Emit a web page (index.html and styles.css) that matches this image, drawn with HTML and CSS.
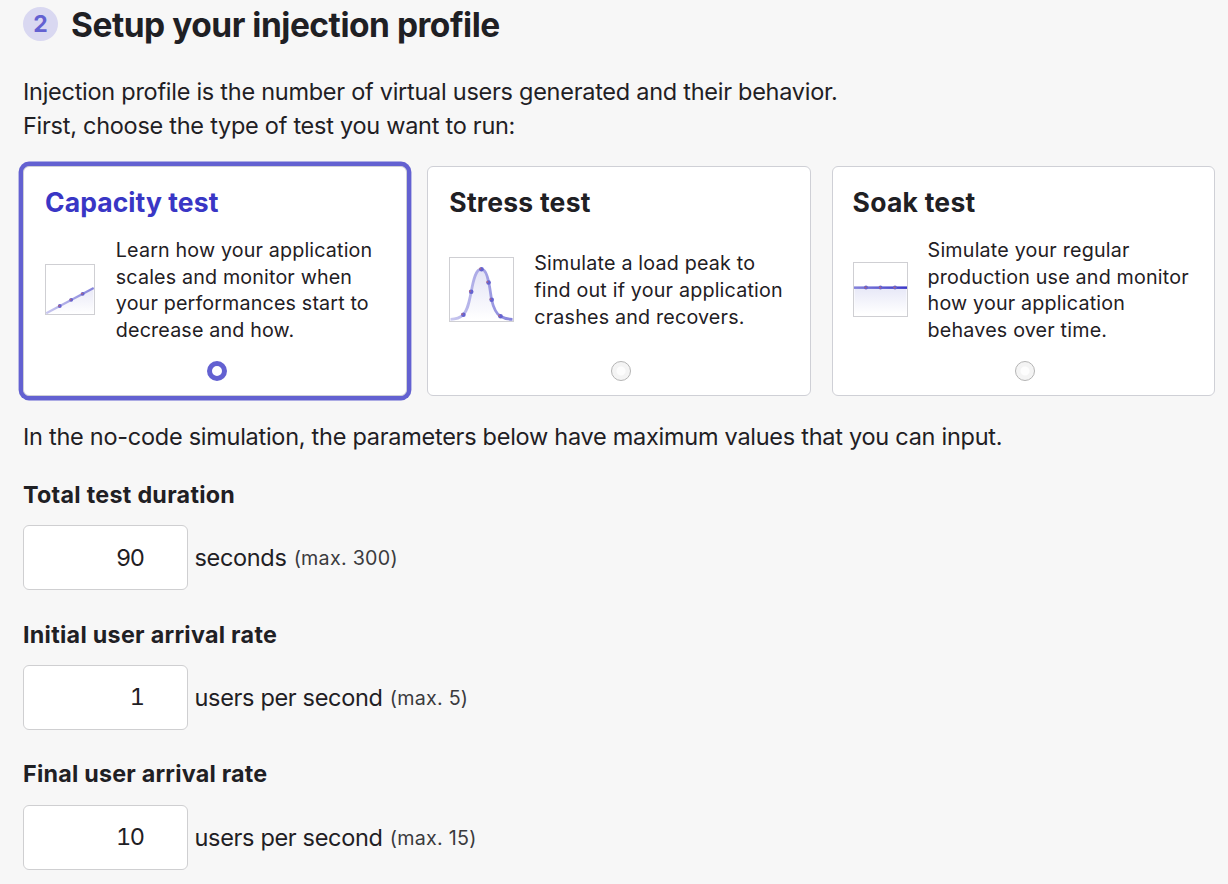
FILE: index.html
```html
<!DOCTYPE html>
<html lang="en">
<head>
<meta charset="utf-8">
<title>Setup your injection profile</title>
<link rel="stylesheet" href="styles.css">
</head>
<body>
<main class="page">
  <header class="step">
    <span class="step-number">2</span>
    <h1 class="step-title">Setup your injection profile</h1>
  </header>
  <p class="text intro">Injection profile is the number of virtual users generated and their behavior.<br>First, choose the type of test you want to run:</p>

  <section class="cards">
    <label class="card card-selected">
      <h2 class="card-title">Capacity test</h2>
      <div class="card-body">
        <svg class="chart" width="50" height="51" viewBox="0 0 50 51">
          <defs>
            <linearGradient id="line1"><stop offset="0" stop-color="#c9c8ef"/><stop offset="1" stop-color="#8583db"/></linearGradient>
            <linearGradient id="fill1" x1="0" y1="0" x2="0" y2="1"><stop offset="0" stop-color="#e9e9f7"/><stop offset="1" stop-color="#fff"/></linearGradient>
          </defs>
          <rect x=".5" y=".5" width="49" height="50" fill="#fff" stroke="#cfcfd3"/>
          <path d="M1 49.5 48.5 25V50H1z" fill="url(#fill1)"/>
          <path d="M1.2 49.2 48.7 24" fill="none" stroke="url(#line1)" stroke-width="2.2"/>
          <g fill="#6562cf"><circle cx="14.8" cy="42" r="1.9"/><circle cx="26.2" cy="35.8" r="1.9"/><circle cx="37.7" cy="29.8" r="1.9"/></g>
          <g fill="#b5687f"><circle cx="14.1" cy="41.8" r=".9"/><circle cx="25.5" cy="35.6" r=".9"/><circle cx="37" cy="29.6" r=".9"/></g>
        </svg>
        <p class="card-text">Learn how your application<br>scales and monitor when<br>your performances start to<br>decrease and how.</p>
      </div>
      <input class="radio" type="radio" name="test" checked>
    </label>
    <label class="card">
      <h2 class="card-title">Stress test</h2>
      <div class="card-body">
        <svg class="chart" width="65" height="65" viewBox="0 0 65 65">
          <defs>
            <linearGradient id="line2"><stop offset="0" stop-color="#c9c8ef"/><stop offset="1" stop-color="#8583db"/></linearGradient>
            <linearGradient id="fill2" x1="0" y1="0" x2="0" y2="1"><stop offset="0" stop-color="#e2e2f5"/><stop offset="1" stop-color="#fff"/></linearGradient>
          </defs>
          <rect x=".5" y=".5" width="64" height="64" fill="#fff" stroke="#cfcfd3"/>
          <path d="M1.5 62.3C7 62.3 11 61 14.2 57.8 19 53 20 45 22.2 35 24.5 22 27 12.2 32.3 12.2 35.5 12.2 38.2 18 39.7 25.5 41 31 41.5 36 42.5 42.5 44.5 51 46.5 56.5 51.5 59.3 55 61.5 58 62.3 63.5 62.3z" fill="url(#fill2)"/>
          <path d="M1.5 62.3C7 62.3 11 61 14.2 57.8 19 53 20 45 22.2 35 24.5 22 27 12.2 32.3 12.2 35.5 12.2 38.2 18 39.7 25.5 41 31 41.5 36 42.5 42.5 44.5 51 46.5 56.5 51.5 59.3 55 61.5 58 62.3 63.5 62.3" fill="none" stroke="url(#line2)" stroke-width="2.8"/>
          <g fill="#6562cf"><circle cx="14.4" cy="57.7" r="2.3"/><circle cx="22.2" cy="34.8" r="2.3"/><circle cx="32.5" cy="12.2" r="2.3"/><circle cx="39.6" cy="25.5" r="2.3"/><circle cx="42.7" cy="42.7" r="2.3"/><circle cx="51.5" cy="59.3" r="2.3"/></g>
          <g fill="#b5687f"><circle cx="13.1" cy="57.1" r=".9"/><circle cx="20.9" cy="34.2" r=".9"/><circle cx="31.2" cy="11.6" r=".9"/><circle cx="38.3" cy="24.9" r=".9"/><circle cx="41.4" cy="42.1" r=".9"/><circle cx="50.2" cy="58.7" r=".9"/></g>
        </svg>
        <p class="card-text">Simulate a load peak to<br>find out if your application<br>crashes and recovers.</p>
      </div>
      <input class="radio" type="radio" name="test">
    </label>
    <label class="card card-soak">
      <h2 class="card-title">Soak test</h2>
      <div class="card-body">
        <svg class="chart" width="55" height="55" viewBox="0 0 55 55">
          <defs>
            <linearGradient id="line3"><stop offset="0" stop-color="#8583db"/><stop offset="1" stop-color="#3a37c8"/></linearGradient>
            <linearGradient id="fill3" x1="0" y1="0" x2="0" y2="1"><stop offset="0" stop-color="#e7e8f7"/><stop offset="1" stop-color="#fff"/></linearGradient>
          </defs>
          <rect x=".5" y=".5" width="54" height="54" fill="#fff" stroke="#cfcfd3"/>
          <rect x="1.5" y="26" width="52" height="26" fill="url(#fill3)"/>
          <rect x="1" y="24.4" width="53" height="2.5" fill="url(#line3)"/>
          <g fill="#6562cf"><circle cx="13" cy="25.5" r="2"/><circle cx="27.5" cy="25.5" r="2"/><circle cx="42" cy="25.5" r="2"/></g>
          <g fill="#a9627f"><circle cx="12.5" cy="25.4" r="1"/><circle cx="27" cy="25.4" r="1"/><circle cx="41.5" cy="25.4" r="1"/></g>
        </svg>
        <p class="card-text">Simulate your regular<br>production use and monitor<br>how your application<br>behaves over time.</p>
      </div>
      <input class="radio" type="radio" name="test">
    </label>
  </section>

  <p class="text note">In the no-code simulation, the parameters below have maximum values that you can input.</p>

  <form class="fields">
    <div class="field">
      <label class="field-label" for="duration">Total test duration</label>
      <div class="field-row"><input class="field-input" id="duration" type="text" value="90"><span class="unit">seconds</span><span class="hint">(max. 300)</span></div>
    </div>
    <div class="field">
      <label class="field-label" for="initial">Initial user arrival rate</label>
      <div class="field-row"><input class="field-input input-rate" id="initial" type="text" value="1"><span class="unit">users per second</span><span class="hint">(max. 5)</span></div>
    </div>
    <div class="field field-last">
      <label class="field-label" for="final">Final user arrival rate</label>
      <div class="field-row"><input class="field-input input-rate" id="final" type="text" value="10"><span class="unit">users per second</span><span class="hint">(max. 15)</span></div>
    </div>
  </form>
</main>
</body>
</html>
```
FILE: styles.css
```css
* { box-sizing: border-box; }

body {
  margin: 0;
  background: #f7f7f7;
  color: #1f2024;
  font-family: Inter, "Liberation Sans", sans-serif;
  overflow: hidden;
}

h1, h2, p { margin: 0; }

.page { padding: 0 13px 0 23px; }

.step {
  display: flex;
  align-items: center;
  height: 49px;
  gap: 13px;
}

.step-number {
  width: 35px;
  height: 34px;
  margin-bottom: 1px;
  border-radius: 50%;
  background: #d9d8f1;
  color: #6361d1;
  font-size: 23px;
  font-weight: 700;
  line-height: 34px;
  text-align: center;
}

.step-title {
  font-size: 33.5px;
  font-weight: 700;
  letter-spacing: -0.48px;
  white-space: nowrap;
}

.text {
  font-size: 23.5px;
  line-height: 34px;
  letter-spacing: -0.27px;
  white-space: nowrap;
}

.intro { margin-top: 26px; }

.cards {
  display: grid;
  grid-template-columns: 383.8px 383.8px 383px;
  gap: 20.5px;
  margin-top: 23px;
}

.card {
  display: flex;
  flex-direction: column;
  align-items: center;
  height: 230px;
  padding: 18px 21px 14px;
  border: 1px solid #cfd0d6;
  border-radius: 6px;
  background: #fff;
}

.card-selected { box-shadow: 0 0 0 4.4px #6361d1; }
.card-selected .card-title { color: #3936c5; letter-spacing: 0.08px; }
.card-soak { padding-left: 20px; }

.card-title {
  align-self: flex-start;
  font-size: 26.5px;
  font-weight: 700;
  line-height: 34px;
  letter-spacing: 0.24px;
}

.card-body {
  display: flex;
  align-items: center;
  align-self: stretch;
  flex: none;
  gap: 20px;
  height: 107px;
  margin-top: 17px;
}

.chart { flex: none; }

.card-text {
  padding-top: 1.6px;
  font-size: 19.7px;
  line-height: 26.67px;
  letter-spacing: 0.19px;
  white-space: nowrap;
}

.card-selected .card-body { gap: 20.8px; }
.card-selected .card-text { letter-spacing: 0.16px; }

.radio {
  appearance: none;
  width: 20px;
  height: 20px;
  margin: 18px 0 0 4px;
  border: 1px solid #b4b4b4;
  border-radius: 50%;
  background: radial-gradient(circle, #fdfdfd 4px, #f4f4f4 5px);
}

.radio:checked {
  border: 5px solid #6361d1;
  background: #fff;
}

.note { margin-top: 24px; }

.fields { margin-top: 24px; }

.field { height: 140px; }

.field-label {
  display: block;
  height: 47px;
  font-size: 23.3px;
  font-weight: 700;
  line-height: 34px;
  letter-spacing: 0.28px;
}

.field-last .field-label {
  height: 48px;
  margin-top: -1px;
  letter-spacing: 0.22px;
}

.field-row {
  display: flex;
  align-items: center;
  white-space: nowrap;
}

.field-input {
  width: 165px;
  height: 65px;
  padding: 0 43.2px 0 10px;
  border: 1px solid #cfcfd1;
  border-radius: 6px;
  background: #fff;
  color: #1f2024;
  font: 23.5px Inter, "Liberation Sans", sans-serif;
  font-variant-numeric: tabular-nums;
  letter-spacing: -1.3px;
  text-align: right;
}

.input-rate { padding-bottom: 2px; }

.unit {
  margin-left: 6.5px;
  font-size: 23.5px;
  letter-spacing: -0.33px;
}

.hint {
  margin-left: 7.2px;
  color: #3b3b3e;
  font-size: 19.7px;
  letter-spacing: 0.25px;
}
```
